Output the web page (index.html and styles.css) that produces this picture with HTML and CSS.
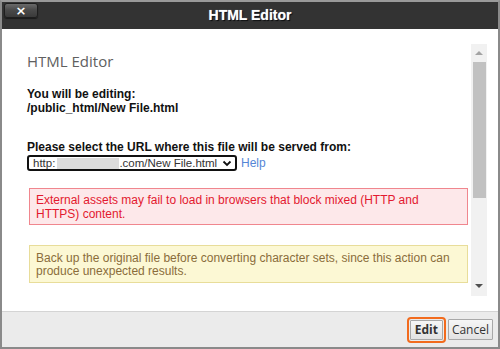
FILE: index.html
```html
<!DOCTYPE html>
<html>
<head>
<meta charset="utf-8">
<link rel="stylesheet" href="styles.css">
</head>
<body>
<div class="dialog">
  <div class="titlebar">
    <div class="tb-left"><button class="close-btn">×</button></div>
    <div class="title">HTML Editor</div>
    <div class="tb-right"></div>
  </div>
  <div class="body">
    <div class="content">
      <h1 class="heading">HTML Editor</h1>
      <p class="editing">You will be editing:<br>/public_html/New File.html</p>
      <p class="prompt">Please select the URL where this file will be served from:</p>
      <div class="url-row">
        <div class="select">
          <span>http:</span><span class="redact"></span><span>.com/New File.html</span>
          <svg class="chev" width="10" height="7" viewBox="0 0 10 7"><path d="M1.5 1.5 L5 5 L8.5 1.5" fill="none" stroke="#111" stroke-width="1.8"/></svg>
        </div>
        <a class="help">Help</a>
      </div>
      <div class="alert alert-error">External assets may fail to load in browsers that block mixed (HTTP and HTTPS) content.</div>
      <div class="alert alert-warn">Back up the original file before converting character sets, since this action can produce unexpected results.</div>
    </div>
    <div class="scrollbar">
      <div class="arrow up"></div>
      <div class="thumb"></div>
      <div class="track-fill"></div>
      <div class="arrow down"></div>
    </div>
  </div>
  <div class="footer">
    <button class="btn btn-primary">Edit</button>
    <button class="btn">Cancel</button>
  </div>
</div>
</body>
</html>
```
FILE: styles.css
```css
* { box-sizing: border-box; }
html, body { margin: 0; padding: 0; background: #fff; }
body { font-family: "Liberation Sans", Arial, sans-serif; font-size: 12px; color: #222; }

.dialog {
  width: 500px;
  height: 349px;
  border: 2px solid #8a8a8a;
  border-top-color: #9a9a9a;
  display: flex;
  flex-direction: column;
  background: #fff;
}

.titlebar {
  height: 27px;
  background: #333333;
  display: grid;
  grid-template-columns: 1fr auto 1fr;
  align-items: center;
  flex: none;
}
.tb-left { display: flex; align-items: flex-start; height: 100%; padding: 1px 0 0 2px; }
.close-btn {
  width: 34px;
  height: 15px;
  border: 1px solid #1e1e1e;
  border-radius: 3px;
  background: linear-gradient(#6a6a6a, #4a4a4a 45%, #3a3a3a);
  color: #fff;
  font-family: "DejaVu Sans", sans-serif;
  font-weight: bold;
  font-size: 13px;
  line-height: 11px;
  padding: 0;
  box-shadow: 0 1px 1px rgba(0,0,0,0.5);
}
.title {
  color: #fff;
  font-weight: bold;
  font-size: 14px;
  text-shadow: 0 0 1px #9ab, 1px 1px 1px #000;
  padding-bottom: 1px;
}

.body {
  flex: 1;
  display: flex;
  min-height: 0;
  overflow: hidden;
}
.content {
  flex: 1;
  padding: 21px 3px 0 25px;
  overflow: hidden;
}
.heading {
  margin: 0;
  font-family: "Open Sans", sans-serif;
  font-weight: normal;
  font-size: 15px;
  line-height: 22px;
  color: #606060;
}
.editing {
  margin: 15px 0 0;
  font-weight: bold;
  line-height: 14px;
  color: #111;
}
.prompt {
  margin: 25px 0 0;
  font-weight: bold;
  line-height: 14px;
  color: #111;
}
.url-row { display: flex; align-items: center; margin-top: 1px; }
.select {
  width: 210px;
  height: 16px;
  border: 2px solid #111;
  border-radius: 3px;
  display: flex;
  align-items: center;
  padding: 0 3px 0 4px;
  color: #333;
  white-space: nowrap;
  font-size: 11.5px;
}
.redact {
  display: inline-block;
  width: 62px;
  height: 11px;
  background: #dcdcdc;
  margin: 0 0 0 2px;
}
.chev { margin-left: auto; }
.help { color: #5585d6; margin-left: 4px; font-size: 12px; }

.alert {
  margin: 17px 0 0 2px;
  padding: 4px 6px 4px 6px;
  line-height: 14px;
  border: 1px solid;
}
.alert-error {
  background: #fde8ea;
  border-color: #f0868e;
  color: #e3192f;
  height: 37px;
}
.alert-warn {
  margin-top: 20px;
  background: #fcf8d4;
  border-color: #e8dd9a;
  color: #8a6d3b;
  height: 38px;
  padding-top: 6px;
  line-height: 13px;
}

.scrollbar {
  width: 16px;
  margin: 15px 11px 15px 0;
  background: #f1f1f1;
  display: flex;
  flex-direction: column;
  align-items: center;
}
.arrow { width: 0; height: 0; border-left: 4px solid transparent; border-right: 4px solid transparent; flex: none; }
.arrow.up { border-bottom: 4px solid #a3a3a3; margin: 7px 0 7px; }
.arrow.down { border-top: 4px solid #505050; margin: 6px 0 8px; }
.thumb { width: 13px; height: 136px; background: #c1c1c1; flex: none; }
.track-fill { flex: 1; }

.footer {
  height: 36px;
  flex: none;
  background: #ebebeb;
  border-top: 1px solid #d4d4d4;
  display: flex;
  justify-content: flex-end;
  align-items: center;
  gap: 3px;
  padding: 0 5px 0 0;
}
.btn {
  font-family: "Open Sans", sans-serif;
  font-size: 12px;
  height: 21px;
  padding: 0 3px;
  background: linear-gradient(#f6f6f6, #e2e2e2);
  border: 1px solid #a8a8a8;
  border-radius: 1px;
  color: #333;
  line-height: 17px;
}
.btn-primary {
  font-weight: bold;
  outline: 2px solid #f26b1d;
  outline-offset: 1px;
  width: 33px;
  height: 20px;
  margin-right: 2px;
}
```
